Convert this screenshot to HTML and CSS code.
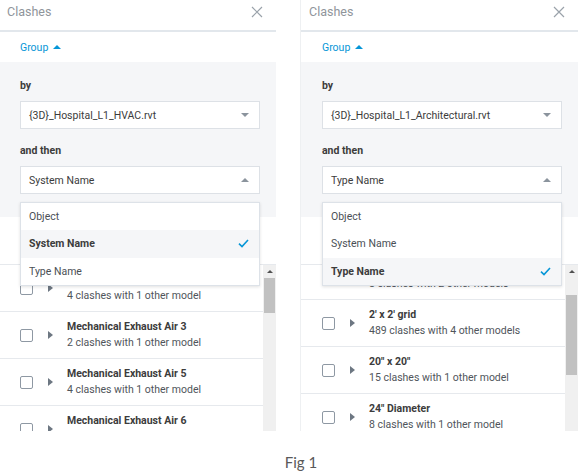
FILE: index.html
```html
<!DOCTYPE html>
<html lang="en">
<head>
  <meta charset="UTF-8" />
  <title>Clashes - Group</title>
  <link rel="stylesheet" href="styles.css">
</head>
<body>
  <div class="figure">
    <!-- left panel: grouped by HVAC model -->
    <div class="panel panel-left">
      <div class="panel-head">
        <span class="panel-title">Clashes</span>
        <svg class="close" width="12" height="12" viewBox="0 0 12 12"><path d="M1 1L11 11M11 1L1 11" stroke="#9aa2aa" stroke-width="1.2" fill="none"/></svg>
      </div>
      <div class="group-toggle">Group <span class="tri-up blue"></span></div>
      <div class="group-box">
        <div class="label">by</div>
        <div class="select">
          <span>{3D}_Hospital_L1_HVAC.rvt</span>
          <span class="tri-down"></span>
        </div>
        <div class="label label-then">and then</div>
        <div class="select-wrap">
          <div class="select">
            <span>System Name</span>
            <span class="tri-up"></span>
          </div>
          <ul class="menu">
            <li>Object</li>
            <li class="selected">System Name
              <svg width="11" height="9" viewBox="0 0 11 9"><path d="M1 4.6L4 7.6L10 1" stroke="#0696d7" stroke-width="1.6" fill="none"/></svg>
            </li>
            <li>Type Name</li>
          </ul>
        </div>
      </div>
      <div class="spacer"></div>
      <div class="list">
        <div class="rows">
          <div class="row">
            <span class="check"></span><span class="tri-right"></span>
            <div class="row-text"><b>Mechanical Exhaust Air 2</b><span>4 clashes with 1 other model</span></div>
          </div>
          <div class="row">
            <span class="check"></span><span class="tri-right"></span>
            <div class="row-text"><b>Mechanical Exhaust Air 3</b><span>2 clashes with 1 other model</span></div>
          </div>
          <div class="row">
            <span class="check"></span><span class="tri-right"></span>
            <div class="row-text"><b>Mechanical Exhaust Air 5</b><span>4 clashes with 1 other model</span></div>
          </div>
          <div class="row">
            <span class="check"></span><span class="tri-right"></span>
            <div class="row-text"><b>Mechanical Exhaust Air 6</b><span>3 clashes with 1 other model</span></div>
          </div>
        </div>
        <div class="scrollbar">
          <span class="scroll-up"></span>
          <span class="thumb thumb-left"></span>
        </div>
      </div>
    </div>

    <!-- right panel: grouped by Architectural model -->
    <div class="panel panel-right">
      <div class="panel-head">
        <span class="panel-title">Clashes</span>
        <svg class="close" width="12" height="12" viewBox="0 0 12 12"><path d="M1 1L11 11M11 1L1 11" stroke="#9aa2aa" stroke-width="1.2" fill="none"/></svg>
      </div>
      <div class="group-toggle">Group <span class="tri-up blue"></span></div>
      <div class="group-box">
        <div class="label">by</div>
        <div class="select">
          <span>{3D}_Hospital_L1_Architectural.rvt</span>
          <span class="tri-down"></span>
        </div>
        <div class="label label-then">and then</div>
        <div class="select-wrap">
          <div class="select">
            <span>Type Name</span>
            <span class="tri-up"></span>
          </div>
          <ul class="menu">
            <li>Object</li>
            <li>System Name</li>
            <li class="selected">Type Name
              <svg width="11" height="9" viewBox="0 0 11 9"><path d="M1 4.6L4 7.6L10 1" stroke="#0696d7" stroke-width="1.6" fill="none"/></svg>
            </li>
          </ul>
        </div>
      </div>
      <div class="spacer"></div>
      <div class="list">
        <div class="rows rows-scrolled">
          <div class="row">
            <span class="check"></span><span class="tri-right"></span>
            <div class="row-text"><b>1' x 4' grid</b><span>8 clashes with 2 other models</span></div>
          </div>
          <div class="row">
            <span class="check"></span><span class="tri-right"></span>
            <div class="row-text"><b>2' x 2' grid</b><span>489 clashes with 4 other models</span></div>
          </div>
          <div class="row">
            <span class="check"></span><span class="tri-right"></span>
            <div class="row-text"><b>20" x 20"</b><span>15 clashes with 1 other model</span></div>
          </div>
          <div class="row">
            <span class="check"></span><span class="tri-right"></span>
            <div class="row-text"><b>24" Diameter</b><span>8 clashes with 1 other model</span></div>
          </div>
        </div>
        <div class="scrollbar">
          <span class="scroll-up"></span>
          <span class="thumb thumb-right"></span>
        </div>
      </div>
    </div>
  </div>

  <p class="caption">Fig 1</p>
</body>
</html>
```

FILE: styles.css
```css
* { box-sizing: border-box; }

body {
  margin: 0;
  background: #fff;
  font-family: Roboto, 'Noto Sans', sans-serif;
  color: #3c3c3c;
  overflow: hidden;
}

.figure {
  display: flex;
  gap: 24px;
  margin-left: -2px;
}

.panel {
  width: 278px;
  height: 431px;
  border-left: 1px solid #eef0f2;
  display: flex;
  flex-direction: column;
  overflow: hidden;
  position: relative;
}

.panel-head {
  height: 32px;
  flex: none;
  display: flex;
  align-items: center;
  justify-content: space-between;
  padding: 0 13px 7px 8px;
  border-bottom: 2px solid #e2e7ec;
}

.panel-title {
  font-size: 12.5px;
  color: #8f959b;
}

.group-toggle {
  height: 30px;
  flex: none;
  display: flex;
  align-items: center;
  gap: 5px;
  padding-left: 21px;
  font-size: 10.5px;
  color: #0696d7;
}

.group-box {
  flex: none;
  background: #f5f6f8;
  padding: 16px 16px 23px 21px;
}

.label {
  font-size: 10.5px;
  font-weight: 700;
  line-height: 16px;
  color: #3c3c3c;
  margin-bottom: 7px;
}

.label-then {
  margin-top: 14px;
}

.select-wrap {
  position: relative;
}

.select {
  height: 28px;
  background: #fff;
  border: 1px solid #dde1e6;
  display: flex;
  align-items: center;
  justify-content: space-between;
  padding: 0 10px 0 8px;
  font-size: 10.5px;
  color: #3c3c3c;
}

.tri-down,
.tri-up {
  width: 0;
  height: 0;
  border-left: 4px solid transparent;
  border-right: 4px solid transparent;
}

.tri-down { border-top: 4px solid #8b949d; }
.tri-up { border-bottom: 4px solid #8b949d; }
.tri-up.blue { border-bottom-color: #0696d7; }

.menu {
  position: absolute;
  top: calc(100% + 8px);
  left: 0;
  right: 0;
  margin: 0;
  padding: 0;
  list-style: none;
  background: #fff;
  border: 1px solid #dde2e8;
  box-shadow: 0 1px 3px rgba(0,0,0,0.12);
  z-index: 5;
}

.menu li {
  height: 27.3px;
  display: flex;
  align-items: center;
  justify-content: space-between;
  padding: 0 10px 0 8px;
  font-size: 10.5px;
  color: #4a4f55;
}

.menu li.selected {
  background: #f5f6f8;
  font-weight: 700;
  color: #3c3c3c;
}

.spacer {
  height: 48px;
  flex: none;
  border-bottom: 1px solid #e6e9ed;
}

.list {
  flex: 1;
  display: flex;
  overflow: hidden;
}

.rows {
  flex: 1;
}

.rows-scrolled {
  margin-top: -12px;
}

.row {
  height: 47px;
  border-bottom: 1px solid #e6e9ed;
  display: flex;
  align-items: center;
  padding-left: 21px;
}

.check {
  width: 13px;
  height: 13px;
  border: 1px solid #8e98a3;
  border-radius: 2px;
  background: #fff;
  flex: none;
}

.tri-right {
  width: 0;
  height: 0;
  border-top: 4px solid transparent;
  border-bottom: 4px solid transparent;
  border-left: 5px solid #6d7782;
  margin-left: 15px;
  flex: none;
}

.row-text {
  margin-left: 14px;
  display: flex;
  flex-direction: column;
  font-size: 10.5px;
  line-height: 16px;
}

.row-text b {
  color: #3c3c3c;
}

.row-text span {
  color: #50555b;
}

.scrollbar {
  width: 13px;
  flex: none;
  background: #f0f0f0;
  display: flex;
  flex-direction: column;
  align-items: center;
}

.scroll-up {
  margin-top: 5px;
  width: 0;
  height: 0;
  border-left: 3px solid transparent;
  border-right: 3px solid transparent;
  border-bottom: 3px solid #505050;
}

.thumb {
  width: 11px;
  background: #c1c1c1;
}

.thumb-left {
  margin-top: 5px;
  height: 35px;
}

.thumb-right {
  margin-top: 22px;
  height: 80px;
}

.caption {
  margin: 21px 0 0;
  padding-left: 20px;
  text-align: center;
  font-family: Lato, sans-serif;
  font-size: 15px;
  line-height: 20px;
  color: #595959;
}
```
